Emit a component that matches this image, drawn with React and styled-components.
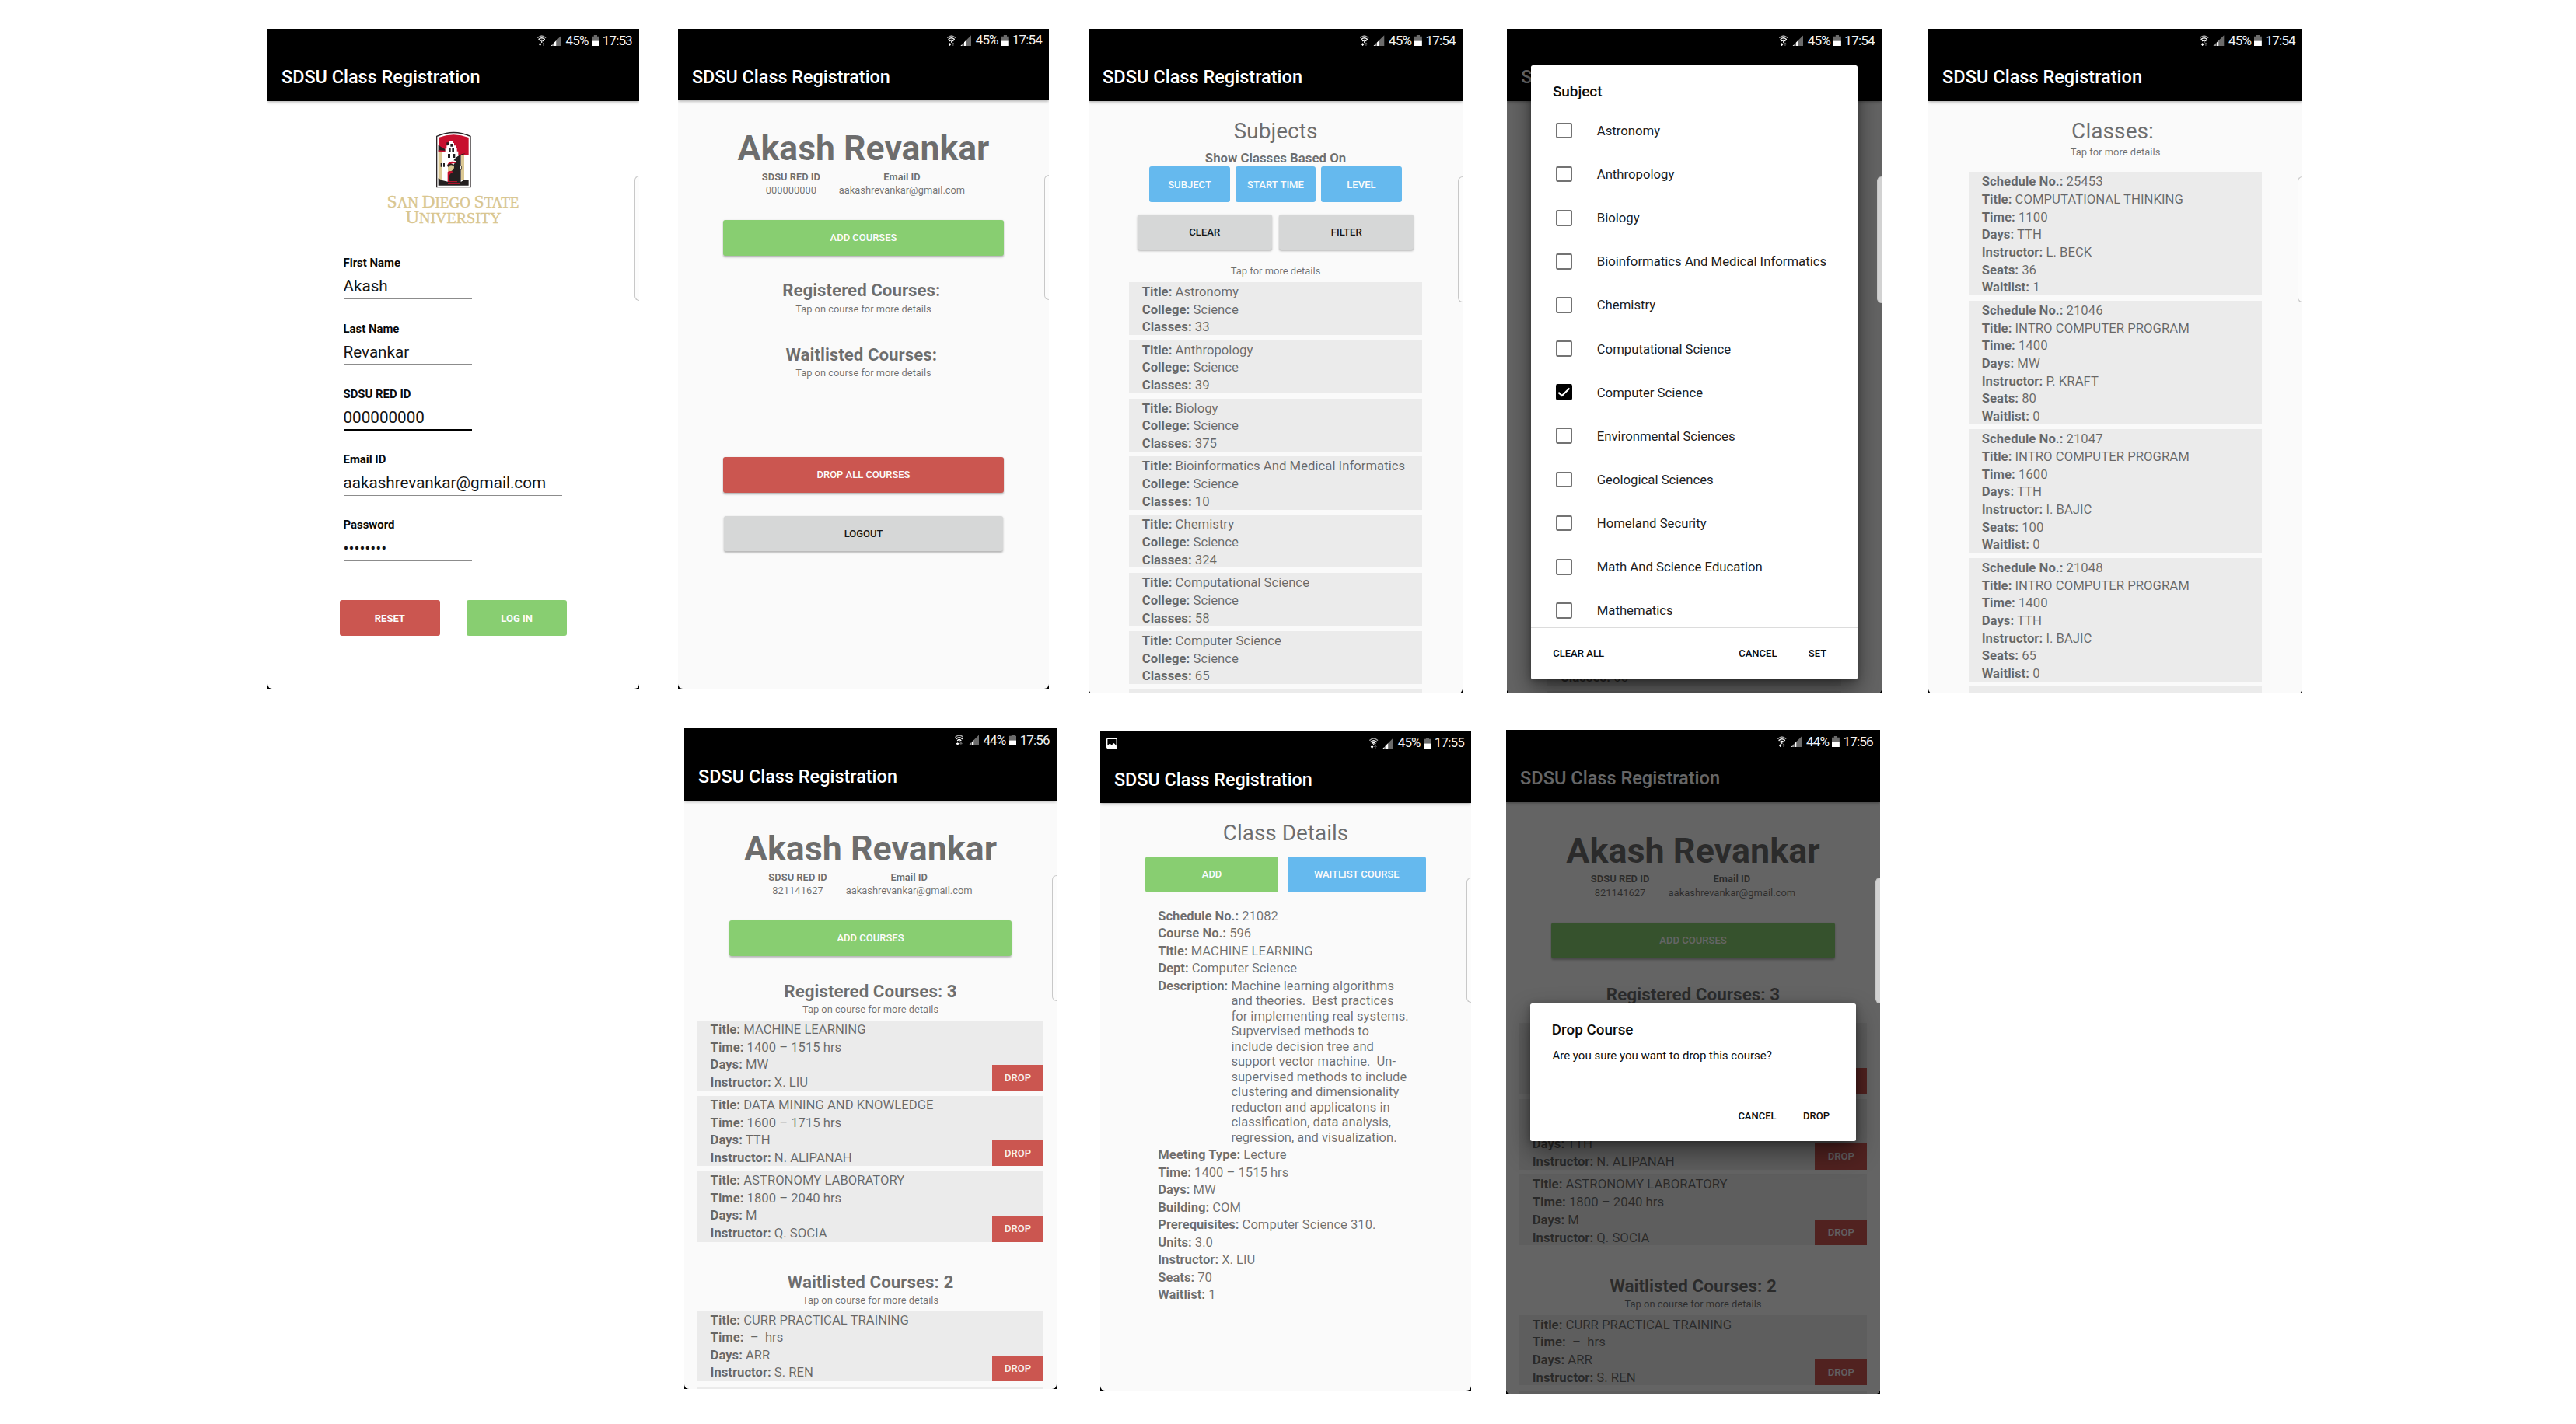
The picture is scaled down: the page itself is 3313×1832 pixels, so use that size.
import React from "react";
import styled, { createGlobalStyle } from "styled-components";

/* Every phone is laid out on a 478-unit wide grid; --u is the size of one unit. */
const u = (n) => `calc(var(--u) * ${n})`;

const palette = {
  green: "#88ce71",
  red: "#cb5650",
  blue: "#65b9ee",
  grey: "#d6d7d7",
  text: "rgba(0, 0, 0, 0.56)",
  surface: "#fafafa",
  tile: "#ebebeb",
};

const GlobalStyle = createGlobalStyle`
  *, *::before, *::after { box-sizing: border-box; }
  body { margin: 0; background: #fff; font-family: Roboto, "Noto Sans", sans-serif; }
`;

const Board = styled.main`
  width: 3313px;
  height: 1832px;
  overflow: hidden;
  display: flex;
  flex-direction: column;
  background: #fff;
`;

const PhoneRow = styled.div`
  display: flex;
  align-items: flex-start;
  height: ${(p) => p.$height}px;
  padding: ${(p) => p.$top}px 0 0 ${(p) => p.$left}px;
`;

const Phone = styled.section`
  --u: ${(p) => p.$width / 478}px;
  position: relative;
  flex: none;
  width: ${(p) => p.$width}px;
  height: ${(p) => p.$height}px;
  margin: ${(p) => p.$drop || 0}px ${(p) => p.$gap || 0}px 0 0;
  background: #000;
  overflow: hidden;
`;

const Screen = styled.div`
  height: 100%;
  display: flex;
  flex-direction: column;
  overflow: hidden;
  background: ${(p) => p.$background || palette.surface};
  border-radius: 0 0 6px 6px;
  color: ${palette.text};
`;

const StatusBar = styled.div`
  display: flex;
  flex: none;
  align-items: center;
  justify-content: flex-end;
  height: ${u(28.7)};
  padding: ${u(0.8)} ${u(9.2)} 0 ${u(8.3)};
  background: #000;
  color: #f2f2f2;
  font-size: ${u(17)};
  letter-spacing: ${u(-0.85)};
  line-height: ${u(22)};
  svg { display: block; }
`;

const Notification = styled.span`
  margin-right: auto;
`;

const StatusText = styled.span`
  margin-left: ${(p) => u(p.$gap)};
`;

const StatusIcon = styled.svg`
  flex: none;
  width: ${(p) => u(p.$width)};
  height: ${u(14.4)};
  margin-left: ${(p) => u(p.$gap || 0)};
`;

const Toolbar = styled.header`
  flex: none;
  position: relative;
  height: ${u(64)};
  padding-left: ${u(18)};
  background: #000;
  color: #fff;
  font-size: ${u(23.42)};
  font-weight: 500;
  line-height: ${u(66.2)};
  box-shadow: 0 1px 4px rgba(0, 0, 0, 0.35);
`;

const Content = styled.div`
  flex: 1;
  min-height: 0;
  overflow: hidden;
  display: flex;
  flex-direction: column;
  align-items: center;
  padding-top: ${(p) => u(p.$top || 0)};
  > * { flex: none; }
`;

const EdgeHandle = styled.div`
  position: absolute;
  top: ${u(188.5)};
  right: 0;
  width: ${u(5.8)};
  height: ${u(161.5)};
  border: 1px solid #c8c8c8;
  border-right: 0;
  border-radius: 6px 0 0 6px;
  background: ${(p) => (p.$lit ? "#d2d2d2" : "#fcfcfc")};
`;

const Scrim = styled.div`
  position: absolute;
  inset: ${u(28)} 0 0 0;
  border-radius: 0 0 6px 6px;
  background: rgba(0, 0, 0, 0.6);
`;

const Button = styled.button`
  display: flex;
  align-items: center;
  justify-content: center;
  width: ${(p) => u(p.$width)};
  height: ${(p) => u(p.$height || 46)};
  margin: 0;
  padding: ${u(1)} 0 0;
  border: 0;
  border-radius: ${u(3)};
  background: ${(p) => palette[p.$tone]};
  color: ${(p) => (p.$tone === "grey" ? "#161616" : "#fcfcfc")};
  font-family: inherit;
  font-size: ${u(13)};
  font-weight: ${(p) => (p.$bold ? 700 : 500)};
  line-height: ${u(16)};
  box-shadow: ${(p) => (p.$flat ? "none" : "0 1.5px 2.5px rgba(0, 0, 0, 0.28)")};
`;

const ButtonRow = styled.div`
  display: flex;
  gap: ${(p) => u(p.$gap)};
  margin-top: ${(p) => u(p.$top || 0)};
`;

const Spacer = styled.div`
  height: ${(p) => u(p.$size)};
`;

/* Login */

const Logo = styled.svg`
  width: ${u(170)};
  height: ${u(124)};
  overflow: visible;
`;

const Form = styled.form`
  width: ${u(283)};
  margin-top: ${u(34.3)};
  color: #000;
`;

const Field = styled.label`
  display: flex;
  flex-direction: column;
  height: ${u(84.25)};
`;

const FieldName = styled.span`
  font-size: ${u(14.92)};
  font-weight: 700;
  line-height: ${u(20.4)};
  height: ${u(20)};
  color: #0a0a0a;
`;

const FieldValue = styled.span`
  width: ${(p) => u(p.$wide ? 281 : 165)};
  height: ${(p) => u(p.$focused ? 37.6 : 36.6)};
  padding-top: ${u(6.2)};
  border-bottom: ${(p) => (p.$focused ? "2.6px solid #000" : "1.5px solid #8c8c8c")};
  font-size: ${u(20.65)};
  line-height: ${u(29.8)};
  color: #141414;
`;

/* Headings and lists */

const Heading = styled.h1`
  margin: 0;
  font-size: ${u(28)};
  font-weight: 400;
  line-height: ${u(34)};
  white-space: pre;
`;

const StudentName = styled.h1`
  margin: 0;
  font-size: ${u(44.65)};
  font-weight: 700;
  line-height: ${u(52)};
`;

const Identity = styled.div`
  display: flex;
  gap: ${u(24)};
  margin: ${u(1.3)} 0 ${u(29.4)};
`;

const IdentityItem = styled.div`
  display: flex;
  flex-direction: column;
  align-items: center;
  font-size: ${u(12.9)};
  line-height: ${u(17.35)};
`;

const SectionTitle = styled.h2`
  margin: ${u(31.3)} 0 0;
  font-size: ${u(22.35)};
  font-weight: 700;
  line-height: ${u(28)};
  white-space: pre;
`;

const Subtitle = styled.h2`
  margin: 0;
  font-size: ${u(16.7)};
  font-weight: 700;
  line-height: ${u(20)};
`;

const Hint = styled.p`
  margin: ${(p) => u(p.$top)} 0 ${(p) => u(p.$bottom)};
  font-size: ${u(12.9)};
  line-height: ${u(18)};
`;

const List = styled.div`
  display: flex;
  flex-direction: column;
  gap: ${u(6.8)};
  width: ${(p) => u(p.$width)};
  margin-bottom: ${(p) => u(p.$bottom || 0)};
`;

const Tile = styled.article`
  display: flex;
  flex: none;
  justify-content: space-between;
  align-items: flex-end;
  min-height: ${u(24)};
  padding-left: ${u(17)};
  background: ${palette.tile};
`;

const Line = styled.div`
  height: ${u(22.54)};
  font-size: ${u(16.64)};
  line-height: ${u(24)};
  white-space: pre;
`;

const DropButton = styled.button`
  flex: none;
  width: ${u(66.7)};
  height: ${u(33.2)};
  padding: 0;
  border: 0;
  background: ${palette.red};
  color: #f6f0f0;
  font-family: inherit;
  font-size: ${u(13)};
  font-weight: 500;
  line-height: ${u(33.2)};
`;

/* Class details */

const Details = styled.div`
  width: ${u(329.2)};
  margin: ${u(19.2)} 0 0;
`;

const Description = styled.div`
  display: flex;
  gap: ${u(4.2)};
  padding: ${u(2)} 0 ${u(1)};
  font-size: ${u(16.62)};
  line-height: ${u(19.55)};
`;

const DescriptionText = styled.div`
  white-space: pre;
`;

/* Dialogs */

const Dialog = styled.div`
  position: absolute;
  top: ${(p) => u(p.$top)};
  left: ${u(30.9)};
  width: ${u(416.3)};
  height: ${(p) => u(p.$height)};
  display: flex;
  flex-direction: column;
  border-radius: ${u(2.5)};
  background: #fff;
  color: #0c0c0c;
  box-shadow: 0 14px 32px rgba(0, 0, 0, 0.45), 0 2px 10px rgba(0, 0, 0, 0.3);
`;

const DialogTitle = styled.h2`
  flex: none;
  margin: 0;
  height: ${(p) => u(p.$height)};
  padding: ${u(22.1)} 0 0 ${u(27.5)};
  font-size: ${u(18.75)};
  font-weight: 500;
  line-height: ${u(24)};
`;

const DialogMessage = styled.p`
  flex: 1;
  margin: 0;
  padding-left: ${u(28.2)};
  font-size: ${u(14.92)};
  line-height: ${u(22)};
`;

const Choices = styled.div`
  flex: 1;
  min-height: 0;
  overflow: hidden;
`;

const Choice = styled.div`
  display: flex;
  align-items: center;
  gap: ${u(31.7)};
  height: ${u(55.66)};
  padding-left: ${u(31.4)};
  font-size: ${u(16.6)};
  color: #1c1c1c;
`;

const Checkbox = styled.span`
  display: block;
  width: ${u(20.8)};
  height: ${u(20.6)};
  border: ${u(2)} solid ${(p) => (p.$checked ? "#000" : "#737373")};
  border-radius: ${u(2.4)};
  background: ${(p) => (p.$checked ? "#000" : "#fff")};
  svg { display: block; width: 100%; height: 100%; }
`;

const Actions = styled.div`
  display: flex;
  flex: none;
  align-items: center;
  gap: ${(p) => u(p.$gap)};
  height: ${u(66.2)};
  padding: ${(p) => u(p.$shift || 0)} ${(p) => u(p.$right)} 0 ${u(27.8)};
  border-top: ${(p) => (p.$divided ? "1px solid #dcdcdc" : "0")};
`;

const Action = styled.span`
  margin-left: ${(p) => (p.$push ? "auto" : "0")};
  font-size: ${u(12.95)};
  font-weight: 500;
`;

function WifiIcon() {
  return (
    <StatusIcon $width={11.4} viewBox="0 0 11.4 14.4" fill="none" strokeLinecap="round">
      <path d="M0.8 3.2 Q5.7 -1.4 10.6 3.2" stroke="#a4a4a4" strokeWidth="1.4" />
      <path d="M2.1 5.4 Q5.7 2.2 9.3 5.4" stroke="#f0f0f0" strokeWidth="1.5" />
      <path d="M3.6 7.5 Q5.7 5.6 7.8 7.5" stroke="#fff" strokeWidth="1.5" />
      <path d="M5.7 8 V9.4" stroke="#ddd" strokeWidth="1.4" />
      <path d="M1.7 11.6 L3.6 14.2 L5.5 11.6 L3.6 10.2 Z" fill="#fff" />
      <path d="M7.9 14 V10.6 M6.6 11.6 L7.9 10.2 L9.2 11.6" stroke="#6f6f6f" strokeWidth="1" />
    </StatusIcon>
  );
}

function SignalIcon() {
  return (
    <StatusIcon $width={14.2} $gap={5.4} viewBox="0 0 14.2 14.4">
      <path d="M7.4 7 L14.2 0.2 V14.4 H7.4 Z" fill="#6b6b6b" />
      <path d="M0 14.4 L2.6 11.9 V14.4 Z M3.4 14.4 V11 L4.4 10 V14.4 Z" fill="#fff" />
      <path d="M5 14.4 V9.4 L7.4 7 V14.4 Z" fill="#fff" />
    </StatusIcon>
  );
}

function BatteryIcon() {
  return (
    <StatusIcon $width={9.8} $gap={4.2} viewBox="0 0 9.8 14.4">
      <path d="M2.8 0 H7 V1.7 H9.8 V8 H0 V1.7 H2.8 Z" fill="#6b6b6b" />
      <rect y="7.6" width="9.8" height="6.8" fill="#fff" />
    </StatusIcon>
  );
}

function PictureIcon() {
  return (
    <Notification>
      <StatusIcon $width={14} viewBox="0 0 14 14.4">
        <rect x="0.7" y="1.2" width="12.6" height="12.2" rx="1" fill="none" stroke="#fff" strokeWidth="1.4" />
        <path d="M1 13 V10.4 L4.4 7.4 L6.6 9.6 L9.6 7 L13 10.6 V13 Z" fill="#fff" />
      </StatusIcon>
    </Notification>
  );
}

function StateLogo() {
  return (
    <Logo viewBox="0 0 170 124">
      <g transform="translate(42 -10) scale(0.33333)">
        <path d="M65 242 V46 Q130 17 195 46 V242 Z" fill="#fff" stroke="#2b2527" strokeWidth="4" />
        <path d="M72 51 Q130 29 188 51 V120 H72 Z" fill="#c8102e" />
        <path d="M71 78 L80 86 L97 96 L100 106 L71 104 Z" fill="#231f20" />
        <path d="M71 104 L100 107 L112 114 V109 L96 101 L71 100 Z" fill="#c8102e" />
        <path
          d="M84 107 H98 V94 H103 V82 H108 V72 H114 V66 H126 V72 H132 V82 H138 V92 H143 V104 H148 V122 L138 132 V150 H108 V222 H84 Z"
          fill="#fff"
        />
        <rect x="71" y="107" width="14" height="106" fill="#dcc893" />
        <path
          d="M103 70 h8 v10 h-8z M118 75 h8 v11 h-8z M111 93 h8 v13 h-8z M124 93 h8 v13 h-8z M108 114 h9 v15 h-9z M127 114 h9 v15 h-9z M80 150 h6 v14 h-6z M90 150 h6 v14 h-6z"
          fill="#231f20"
        />
        <path d="M130 139 Q146 116 176 112 L158 121 V222 H108 V170 Q126 164 134 150 L140 142 Z" fill="#231f20" />
        <path d="M106 158 Q110 140 132 144 L140 150 Q118 148 108 162 Z" fill="#c8102e" />
        <path d="M108 160 Q122 146 132 160 Q134 178 116 182 L108 184 Z" fill="#dcc893" />
        <path d="M106 156 Q124 146 132 160 L126 158 Q114 154 108 166 Z" fill="#231f20" />
        <path d="M107 222 V184 Q116 176 130 184 Q116 188 113 200 V222 Z" fill="#c8102e" />
        <rect x="159" y="120" width="12" height="96" fill="#dcc893" />
        <rect x="171" y="120" width="17" height="96" fill="#fff" />
        <rect x="154" y="160" width="6" height="14" fill="#f5f0e4" stroke="#231f20" strokeWidth="2" />
        <path d="M71 208 L86 216 L102 220 L110 222 H158 L172 214 L188 216 V236 H71 Z" fill="#231f20" />
        <path d="M112 221 h32 M108 229 h48" stroke="#c8102e" strokeWidth="3" />
      </g>
      <g fill="#d9c68f" stroke="#d9c68f" strokeWidth="0.4" fontFamily="'Liberation Serif', 'Times New Roman', serif">
        <text x="-0.2" y="96.8" fontSize="19.8" textLength="169.6" lengthAdjust="spacingAndGlyphs">
          <tspan fontSize="24">S</tspan>AN <tspan fontSize="24">D</tspan>IEGO <tspan fontSize="24">S</tspan>TATE
        </text>
        <text x="23.5" y="117" fontSize="19.8" textLength="123" lengthAdjust="spacingAndGlyphs">
          <tspan fontSize="24">U</tspan>NIVERSITY
        </text>
      </g>
    </Logo>
  );
}

function Device({ frame, battery, time, picture, background, dialog, children }) {
  return (
    <Phone $width={frame.width} $height={frame.height} $gap={frame.gap} $drop={frame.drop}>
      <Screen $background={background}>
        <StatusBar>
          {picture && <PictureIcon />}
          <WifiIcon />
          <SignalIcon />
          <StatusText $gap={5.4}>{battery}</StatusText>
          <BatteryIcon />
          <StatusText $gap={4.2}>{time}</StatusText>
        </StatusBar>
        <Toolbar>SDSU Class Registration</Toolbar>
        {children}
      </Screen>
      {dialog && <Scrim />}
      {dialog}
      <EdgeHandle $lit={Boolean(dialog)} />
    </Phone>
  );
}

function Entry({ name, value }) {
  return (
    <Line>
      <b>{name}:</b> {value}
    </Line>
  );
}

function Record({ entries, droppable }) {
  return (
    <Tile>
      <div>
        {entries.map(([name, value]) => (
          <Entry key={name} name={name} value={value} />
        ))}
      </div>
      {droppable && <DropButton>DROP</DropButton>}
    </Tile>
  );
}

function LoginScreen() {
  return (
    <Content $top={40.3}>
      <StateLogo />
      <Form>
        <Field>
          <FieldName>First Name</FieldName>
          <FieldValue>Akash</FieldValue>
        </Field>
        <Field>
          <FieldName>Last Name</FieldName>
          <FieldValue>Revankar</FieldValue>
        </Field>
        <Field>
          <FieldName>SDSU RED ID</FieldName>
          <FieldValue $focused>000000000</FieldValue>
        </Field>
        <Field>
          <FieldName>Email ID</FieldName>
          <FieldValue $wide>aakashrevankar@gmail.com</FieldValue>
        </Field>
        <Field>
          <FieldName>Password</FieldName>
          <FieldValue>••••••••</FieldValue>
        </Field>
      </Form>
      <ButtonRow $gap={34.7} $top={22.3}>
        <Button $tone="red" $width={128.7} $height={46.5} $bold $flat>RESET</Button>
        <Button $tone="green" $width={128.7} $height={46.5} $bold $flat>LOG IN</Button>
      </ButtonRow>
    </Content>
  );
}

const course = (title, time, days, instructor) => [
  ["Title", title],
  ["Time", time],
  ["Days", days],
  ["Instructor", instructor],
];

const registered = [
  course("MACHINE LEARNING", "1400 – 1515 hrs", "MW", "X. LIU"),
  course("DATA MINING AND KNOWLEDGE", "1600 – 1715 hrs", "TTH", "N. ALIPANAH"),
  course("ASTRONOMY LABORATORY", "1800 – 2040 hrs", "M", "Q. SOCIA"),
];

/* The second waitlisted course only peeks in at the bottom edge. */
const waitlisted = [course("CURR PRACTICAL TRAINING", " –  hrs", "ARR", "S. REN"), []];

function CourseSection({ title, courses }) {
  return (
    <>
      <SectionTitle>{`${title} Courses: ${courses.length || ""}`}</SectionTitle>
      <Hint $top={0.8} $bottom={4.7}>Tap on course for more details</Hint>
      {courses.length > 0 && (
        <List $width={445} $bottom={6.2}>
          {courses.map((entries, i) => (
            <Record key={i} entries={entries} droppable={entries.length > 0} />
          ))}
        </List>
      )}
    </>
  );
}

function HomeScreen({ redId, registeredCourses = [], waitlistedCourses = [] }) {
  return (
    <Content $top={36.3}>
      <StudentName>Akash Revankar</StudentName>
      <Identity>
        <IdentityItem>
          <b>SDSU RED ID</b>
          <span>{redId}</span>
        </IdentityItem>
        <IdentityItem>
          <b>Email ID</b>
          <span>aakashrevankar@gmail.com</span>
        </IdentityItem>
      </Identity>
      <Button $tone="green" $width={362}>ADD COURSES</Button>
      <CourseSection title="Registered" courses={registeredCourses} />
      <CourseSection title="Waitlisted" courses={waitlistedCourses} />
      {registeredCourses.length === 0 && (
        <>
          <Spacer $size={94} />
          <Button $tone="red" $width={362} $height={46.4}>DROP ALL COURSES</Button>
          <Spacer $size={29.9} />
          <Button $tone="grey" $width={359.6} $height={45.4}>LOGOUT</Button>
        </>
      )}
    </Content>
  );
}

const subjects = [
  ["Astronomy", 33],
  ["Anthropology", 39],
  ["Biology", 375],
  ["Bioinformatics And Medical Informatics", 10],
  ["Chemistry", 324],
  ["Computational Science", 58],
  ["Computer Science", 65],
];

function SubjectsScreen() {
  return (
    <Content $top={22}>
      <Heading>Subjects</Heading>
      <Spacer $size={6.5} />
      <Subtitle>Show Classes Based On</Subtitle>
      <ButtonRow $gap={7} $top={1.1}>
        <Button $tone="blue" $width={102.8} $height={45.7} $flat>SUBJECT</Button>
        <Button $tone="blue" $width={102.8} $height={45.7} $flat>START TIME</Button>
        <Button $tone="blue" $width={102.8} $height={45.7} $flat>LEVEL</Button>
      </ButtonRow>
      <ButtonRow $gap={9} $top={15.5}>
        <Button $tone="grey" $width={172.3} $height={45.2}>CLEAR</Button>
        <Button $tone="grey" $width={172.3} $height={45.2}>FILTER</Button>
      </ButtonRow>
      <Hint $top={18.5} $bottom={4.8}>Tap for more details</Hint>
      <List $width={375.4}>
        {subjects.map(([title, count]) => (
          <Record key={title} entries={[["Title", title], ["College", "Science"], ["Classes", count]]} />
        ))}
        <Tile />
      </List>
    </Content>
  );
}

const offerings = [
  [25453, "COMPUTATIONAL THINKING", 1100, "TTH", "L. BECK", 36, 1],
  [21046, "INTRO COMPUTER PROGRAM", 1400, "MW", "P. KRAFT", 80, 0],
  [21047, "INTRO COMPUTER PROGRAM", 1600, "TTH", "I. BAJIC", 100, 0],
  [21048, "INTRO COMPUTER PROGRAM", 1400, "TTH", "I. BAJIC", 65, 0],
  [21049],
];

const offeringFields = ["Schedule No.", "Title", "Time", "Days", "Instructor", "Seats", "Waitlist"];

function ClassesScreen() {
  return (
    <Content $top={22}>
      <Heading>{"Classes: "}</Heading>
      <Hint $top={0} $bottom={16.5}>Tap for more details</Hint>
      <List $width={375.4}>
        {offerings.map((row) => (
          <Record key={row[0]} entries={row.map((value, i) => [offeringFields[i], value])} />
        ))}
      </List>
    </Content>
  );
}

const description = [
  "Machine learning algorithms",
  "and theories.  Best practices",
  "for implementing real systems.",
  "Supvervised methods to",
  "include decision tree and",
  "support vector machine.  Un-",
  "supervised methods to include",
  "clustering and dimensionality",
  "reducton and applicatons in",
  "classification, data analysis,",
  "regression, and visualization.",
];

function ClassDetailsScreen() {
  return (
    <Content $top={21.4}>
      <Heading>Class Details</Heading>
      <ButtonRow $gap={11.7} $top={13}>
        <Button $tone="green" $width={171.2} $flat>ADD</Button>
        <Button $tone="blue" $width={178.6} $flat>WAITLIST COURSE</Button>
      </ButtonRow>
      <Details>
        <Entry name="Schedule No." value="21082" />
        <Entry name="Course No." value="596" />
        <Entry name="Title" value="MACHINE LEARNING" />
        <Entry name="Dept" value="Computer Science" />
        <Description>
          <b>Description:</b>
          <DescriptionText>{description.join("\n")}</DescriptionText>
        </Description>
        <Entry name="Meeting Type" value="Lecture" />
        <Entry name="Time" value="1400 – 1515 hrs" />
        <Entry name="Days" value="MW" />
        <Entry name="Building" value="COM" />
        <Entry name="Prerequisites" value="Computer Science 310." />
        <Entry name="Units" value="3.0" />
        <Entry name="Instructor" value="X. LIU" />
        <Entry name="Seats" value="70" />
        <Entry name="Waitlist" value="1" />
      </Details>
    </Content>
  );
}

const choices = [
  "Astronomy",
  "Anthropology",
  "Biology",
  "Bioinformatics And Medical Informatics",
  "Chemistry",
  "Computational Science",
  "Computer Science",
  "Environmental Sciences",
  "Geological Sciences",
  "Homeland Security",
  "Math And Science Education",
  "Mathematics",
];

function SubjectDialog({ selected }) {
  return (
    <Dialog $top={46.6} $height={783}>
      <DialogTitle $height={55.4}>Subject</DialogTitle>
      <Choices>
        {choices.map((name) => (
          <Choice key={name}>
            <Checkbox $checked={name === selected}>
              {name === selected && (
                <svg viewBox="0 0 17 17" fill="none" stroke="#fff" strokeWidth="2.2">
                  <path d="M1.2 9 L5.8 13.2 L15.6 3.6" />
                </svg>
              )}
            </Checkbox>
            {name}
          </Choice>
        ))}
      </Choices>
      <Actions $gap={40} $right={39.4} $divided>
        <Action>CLEAR ALL</Action>
        <Action $push>CANCEL</Action>
        <Action>SET</Action>
      </Actions>
    </Dialog>
  );
}

function DropDialog() {
  return (
    <Dialog $top={349.8} $height={175.7}>
      <DialogTitle $height={55.6}>Drop Course</DialogTitle>
      <DialogMessage>Are you sure you want to drop this course?</DialogMessage>
      <Actions $gap={34.2} $right={33.8} $shift={3}>
        <Action $push>CANCEL</Action>
        <Action>DROP</Action>
      </Actions>
    </Dialog>
  );
}

export default function App() {
  return (
    <>
      <GlobalStyle />
      <Board>
        <PhoneRow $top={37} $left={344} $height={937}>
          <Device frame={{ width: 478, height: 849, gap: 50 }} battery="45%" time="17:53" background="#fff">
            <LoginScreen />
          </Device>
          <Device frame={{ width: 477, height: 849, gap: 51 }} battery="45%" time="17:54">
            <HomeScreen redId="000000000" />
          </Device>
          <Device frame={{ width: 481, height: 855, gap: 57 }} battery="45%" time="17:54">
            <SubjectsScreen />
          </Device>
          <Device
            frame={{ width: 482, height: 855, gap: 60 }}
            battery="45%"
            time="17:54"
            dialog={<SubjectDialog selected="Computer Science" />}
          >
            <SubjectsScreen />
          </Device>
          <Device frame={{ width: 481, height: 855 }} battery="45%" time="17:54">
            <ClassesScreen />
          </Device>
        </PhoneRow>
        <PhoneRow $top={0} $left={880} $height={895}>
          <Device frame={{ width: 479, height: 850, gap: 56 }} battery="44%" time="17:56">
            <HomeScreen redId="821141627" registeredCourses={registered} waitlistedCourses={waitlisted} />
          </Device>
          <Device frame={{ width: 477, height: 848, gap: 45, drop: 4 }} battery="45%" time="17:55" picture>
            <ClassDetailsScreen />
          </Device>
          <Device
            frame={{ width: 481, height: 854, drop: 2 }}
            battery="44%"
            time="17:56"
            dialog={<DropDialog />}
          >
            <HomeScreen redId="821141627" registeredCourses={registered} waitlistedCourses={waitlisted} />
          </Device>
        </PhoneRow>
      </Board>
    </>
  );
}
